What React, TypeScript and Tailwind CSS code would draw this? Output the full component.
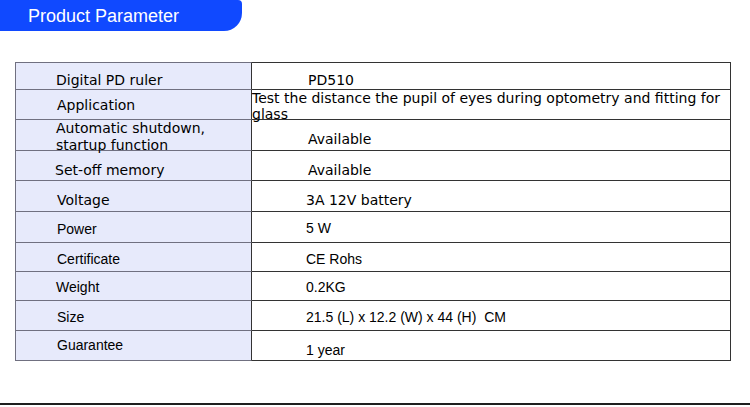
const rows = [
  { h: "h-[28px]", l: "Digital PD ruler", lc: "pt-[9px] pl-[40px]", r: "PD510", rc: "pt-[9px] pl-[56px]", font: "dv" },
  { h: "h-[30px]", l: "Application", lc: "pt-[7px] pl-[41px]", r: "Test the distance the pupil of eyes during optometry and fitting for glass", rc: "pt-0 pl-0 leading-[16px]", font: "dv" },
  { h: "h-[31px]", l: "Automatic shutdown, startup function", lc: "pt-0 pl-[40px] pr-[40px] leading-[17px]", r: "Available", rc: "pt-[11px] pl-[56px]", font: "dv" },
  { h: "h-[30px]", l: "Set-off memory", lc: "pt-[11px] pl-[39px]", r: "Available", rc: "pt-[11px] pl-[56px]", font: "dv" },
  { h: "h-[31px]", l: "Voltage", lc: "pt-[11px] pl-[41px]", r: "3A 12V battery", rc: "pt-[11px] pl-[54px]", font: "dv" },
  { h: "h-[31px]", l: "Power", lc: "pt-[9px] pl-[41px]", r: "5 W", rc: "pt-[8px] pl-[54px]", font: "ls" },
  { h: "h-[29px]", l: "Certificate", lc: "pt-[8px] pl-[41px]", r: "CE Rohs", rc: "pt-[8px] pl-[54px]", font: "ls" },
  { h: "h-[29px]", l: "Weight", lc: "pt-[7px] pl-[40px]", r: "0.2KG", rc: "pt-[7px] pl-[54px]", font: "ls" },
  { h: "h-[30px]", l: "Size", lc: "pt-[8px] pl-[41px]", r: "21.5 (L) x 12.2 (W) x 44 (H)\u00a0 CM", rc: "pt-[8px] pl-[54px]", font: "ls" },
  { h: "h-[30px]", l: "Guarantee", lc: "pt-[6px] pl-[41px]", r: "1 year", rc: "pt-[11px] pl-[54px]", font: "ls" },
];

function App() {
  return (
    <div className="w-[750px] h-[407px] bg-white overflow-hidden">
      {/* title tab */}
      <div className="w-[242px] h-[31px] bg-[#1049ff] rounded-tr-[4px] rounded-br-[18px] pl-[28px] pt-[1.5px]">
        <span className="text-white text-[18px] leading-[29.5px] font-['Liberation_Sans',Arial,sans-serif]">
          Product Parameter
        </span>
      </div>

      {/* parameter table */}
      <div className="ml-[15px] mt-[31px] w-[716px] text-[14px] leading-[16px] text-black">
        {rows.map((row, i) => {
          const font =
            row.font === "dv"
              ? "font-['DejaVu_Sans',Verdana,sans-serif]"
              : "font-['Liberation_Sans',Arial,sans-serif]";
          return (
            <div key={i} className={`flex ${row.h} ${font}`}>
              <div
                className={`w-[237px] shrink-0 bg-[#e7eafb] border-l border-r border-b border-l-[#707080] border-b-[#707080] border-r-[#333] ${
                  i === 0 ? "border-t border-t-[#707080]" : ""
                }`}
              >
                <div className={`relative ${row.lc}`}>{row.l}</div>
              </div>
              <div
                className={`w-[479px] shrink-0 border-r border-b border-[#333] ${
                  i === 0 ? "border-t" : ""
                }`}
              >
                <div className={`relative ${row.rc}`}>{row.r}</div>
              </div>
            </div>
          );
        })}
      </div>

      <div className="mt-[42px] h-[2px] w-full bg-[#1e1e1e]" />
    </div>
  );
}

export default App;
